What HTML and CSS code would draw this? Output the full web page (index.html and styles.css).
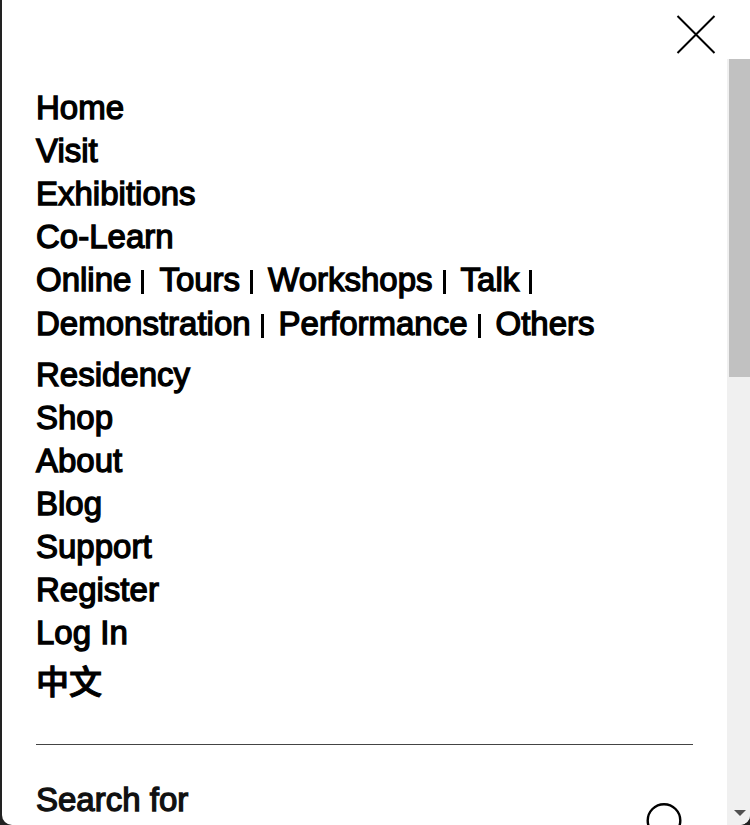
FILE: index.html
```html
<!DOCTYPE html>
<html lang="en">
<head>
<meta charset="utf-8">
<meta name="viewport" content="width=device-width, initial-scale=1">
<title>Menu</title>
<link rel="stylesheet" href="styles.css">
</head>
<body>
<div class="panel">
  <header class="panel-header">
    <button class="close" type="button" aria-label="Close menu">
      <svg width="40" height="40" viewBox="0 0 40 40" fill="none" stroke="#000" stroke-width="2"><path d="M1.5 2 38.5 39M38.5 2 1.5 39"/></svg>
    </button>
  </header>
  <div class="panel-body">
    <main class="content">
      <nav>
        <ul class="menu">
          <li><a href="#">Home</a></li>
          <li><a href="#">Visit</a></li>
          <li><a href="#">Exhibitions</a></li>
          <li><a href="#">Co-Learn</a>
            <ul class="submenu">
              <li><a href="#">Online</a></li>
              <li><a href="#">Tours</a></li>
              <li><a href="#">Workshops</a></li>
              <li><a href="#">Talk</a></li>
              <li><a href="#">Demonstration</a></li>
              <li><a href="#">Performance</a></li>
              <li><a href="#">Others</a></li>
            </ul>
          </li>
          <li><a href="#">Residency</a></li>
          <li><a href="#">Shop</a></li>
          <li><a href="#">About</a></li>
          <li><a href="#">Blog</a></li>
          <li><a href="#">Support</a></li>
          <li><a href="#">Register</a></li>
          <li><a href="#">Log In</a></li>
          <li class="language"><a href="#" lang="zh">中文</a></li>
        </ul>
      </nav>
      <form class="search">
        <input class="search-input" type="text" aria-label="Search for" placeholder="Search for">
        <button class="search-button" type="button" aria-label="Search">
          <svg width="48" height="48" viewBox="0 0 48 48" fill="none" stroke="#000" stroke-width="2.4"><circle cx="19" cy="20.5" r="16.3"/><path d="M31 32 44 45"/></svg>
        </button>
      </form>
    </main>
    <div class="scrollbar" aria-hidden="true">
      <div class="thumb"></div>
      <svg class="arrow" width="12" height="6" viewBox="0 0 12 6"><path d="M0 0h12L6 6z" fill="#505050"/></svg>
    </div>
  </div>
</div>
</body>
</html>
```
FILE: styles.css
```css
* {
  box-sizing: border-box;
}

body {
  margin: 0;
  background: #222;
  color: #000;
  font: 33px/43px "Liberation Sans", "Noto Sans CJK TC", sans-serif;
}

.panel {
  display: flex;
  flex-direction: column;
  height: 100vh;
  margin-left: 2px;
  overflow: hidden;
  background: #fff;
  border-radius: 0 0 10px 10px;
}

.panel-header {
  display: flex;
  flex: none;
  justify-content: flex-end;
  padding: 14px 34px 5px;
}

button {
  padding: 0;
  border: 0;
  background: none;
  cursor: pointer;
}

svg {
  display: block;
}

.panel-body {
  display: flex;
  flex: 1;
  min-height: 0;
}

.content {
  flex: 1;
  min-width: 0;
  padding: 27px 34px 0;
  overflow: hidden;
}

ul {
  margin: 0;
  padding: 0;
  list-style: none;
}

a {
  color: inherit;
  text-decoration: none;
}

/* Thickens the regular face to a medium weight */
a,
.search-input {
  -webkit-text-stroke: 0.04em;
}

.submenu {
  display: flex;
  flex-wrap: wrap;
  row-gap: 1px;
  padding-bottom: 8px;
}

.submenu li:not(:last-child)::after {
  content: "";
  display: inline-block;
  width: 3px;
  height: 24px;
  margin: 0 15px 0 10px;
  background: #000;
  vertical-align: -3px;
}

.language {
  padding: 7px 0 40px;
}

.language a {
  display: block;
  font-weight: 500;
  -webkit-text-stroke: 1px;
}

.search {
  display: flex;
  align-items: flex-start;
  padding-top: 33px;
  border-top: 1px solid #444;
}

.search-input {
  flex: 1;
  min-width: 0;
  height: 43px;
  padding: 0;
  border: 0;
  outline: 0;
  background: none;
  color: #111;
  font: inherit;
}

.search-input::placeholder {
  color: #111;
  opacity: 1;
}

.search-button {
  flex: none;
  padding-top: 22px;
}

.scrollbar {
  display: flex;
  flex: none;
  flex-direction: column;
  justify-content: space-between;
  width: 23px;
  padding: 0 0 9px 2px;
  background: #f0f0f0;
}

.thumb {
  height: 42%;
  background: #c1c1c1;
}

.arrow {
  margin-left: 5px;
}
```
